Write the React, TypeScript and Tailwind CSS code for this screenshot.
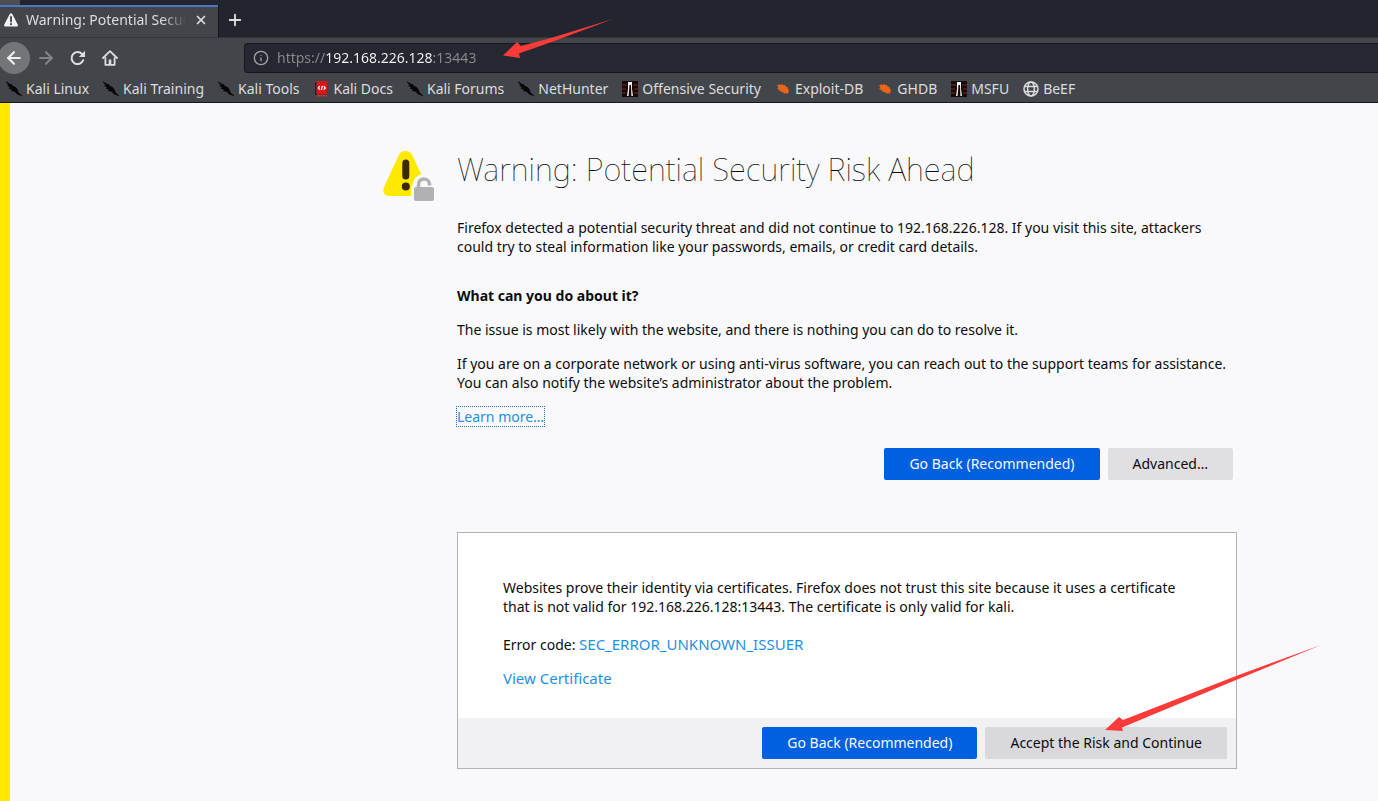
import { useState } from "react";
import { ArrowLeft, ArrowRight, Info, Plus, X } from "lucide-react";

type BookmarkIcon = "dragon" | "docs" | "offsec" | "exploit" | "globe";

const bookmarks: { label: string; icon: BookmarkIcon }[] = [
  { label: "Kali Linux", icon: "dragon" },
  { label: "Kali Training", icon: "dragon" },
  { label: "Kali Tools", icon: "dragon" },
  { label: "Kali Docs", icon: "docs" },
  { label: "Kali Forums", icon: "dragon" },
  { label: "NetHunter", icon: "dragon" },
  { label: "Offensive Security", icon: "offsec" },
  { label: "Exploit-DB", icon: "exploit" },
  { label: "GHDB", icon: "exploit" },
  { label: "MSFU", icon: "offsec" },
  { label: "BeEF", icon: "globe" },
];

function Favicon({ icon }: { icon: BookmarkIcon }) {
  if (icon === "globe") {
    return (
      <svg viewBox="0 0 16 16" className="h-4 w-4" fill="none" stroke="#dcdcdd" strokeWidth="1.5">
        <circle cx="8" cy="8" r="7" />
        <ellipse cx="8" cy="8" rx="3.4" ry="7" />
        <path d="M1.5 5.5h13M1.5 10.5h13" />
      </svg>
    );
  }
  if (icon === "docs") {
    return (
      <svg viewBox="0 0 16 16" className="h-4 w-4">
        <path d="M2 1h2v14H2z" fill="#1c2433" />
        <path d="M3.5 0H14v13H3.5z" fill="#d8161b" />
        <path d="M2.5 14H14v1.5H2.5z" fill="#d8262a" />
        <path d="M6.8 5.2 5.3 7l1.5 1.6M9.4 4.8 8.4 9M10.8 5.2l1.5 1.8-1.5 1.6" fill="none" stroke="#fff" strokeWidth="1.2" />
      </svg>
    );
  }
  if (icon === "offsec") {
    return (
      <svg viewBox="0 0 16 16" className="h-4 w-4">
        <path d="M0 0h16v16H0z" fill="#170a0b" />
        <path d="M0 4h5M0 8h4M0 12h4M11 4h5M12 8h4M12 12h4" stroke="#5c1c1c" strokeWidth="1.4" />
        <path d="M6 1h4v7l1 7H9.4L9 4H7.5L6.6 15H5l1-7z" fill="#f4f2f0" />
      </svg>
    );
  }
  if (icon === "exploit") {
    return (
      <svg viewBox="0 0 16 16" className="h-4 w-4">
        <path d="M2 4.5 4.5 3.2l1.3.8L7 2.8l1.2 1.4 1.6-.4.8 1.7 2 .4-.2 1.4 1.8 1.4-1 .8 1.2 1.6-1.4.2-.4 1.6-1.8-.8-1.6.6-1-1.4-2.2-.2-.2-1.4L3.6 9.6l.2-1.3L2 7.5l1.4-1.3z" fill="#e8651a" />
      </svg>
    );
  }
  return (
    <svg viewBox="0 0 16 16" className="h-4 w-4">
      <path d="M0 .8 4.4 3.4l1-.4 1 2 3 1.2 2 2.6.8 2.8L16 14.8l-5-1.8-2-2.6-3.6-.6L6.6 8.6 3 7.4l1.6-.6L1.6 4.6l1.6-.2z" fill="#050505" stroke="#050505" strokeWidth=".6" />
    </svg>
  );
}

function WarningSmall() {
  return (
    <svg viewBox="0 0 14 14" className="h-3.5 w-3.5 shrink-0">
      <path d="M7 .3c.6 0 1 .3 1.3.8l5.4 10.4c.5 1-.1 2.1-1.2 2.1h-11c-1.1 0-1.7-1.1-1.2-2.1L5.7 1.1C6 .6 6.4.3 7 .3z" fill="#f3f3f4" />
      <path d="M7 4v4.5" stroke="#42454a" strokeWidth="1.8" strokeLinecap="round" />
      <circle cx="7" cy="11.2" r="1.1" fill="#42454a" />
    </svg>
  );
}

function ReloadIcon() {
  return (
    <svg viewBox="0 0 16 16" className="h-4 w-4" fill="none" stroke="currentColor" strokeWidth="2">
      <path d="M13.2 10.2A6 6 0 1 1 12 4" strokeLinecap="round" />
      <path d="M15 .8V7H8.8z" fill="currentColor" stroke="none" />
    </svg>
  );
}

function HomeIcon() {
  return (
    <svg viewBox="0 0 16 16" className="h-4 w-4" fill="none" stroke="currentColor" strokeWidth="1.8" strokeLinejoin="round" strokeLinecap="round">
      <path d="M1 8 8 1.2 15 8" />
      <path d="M3.4 8v6.8h9.2V8" />
      <path d="M8 14V9.5" strokeWidth="2.6" strokeLinecap="butt" />
    </svg>
  );
}

function WarningLock() {
  return (
    <svg viewBox="0 0 52 52" className="h-13 w-13 shrink-0" aria-hidden="true">
      <path d="M22.5 1c3 0 5.3 1.4 6.7 4.2l15 31.3c2 4.2-.4 9.5-5.2 9.5H6C1.2 46-1 41.3 1 37L15.8 5.2C17.2 2.4 19.5 1 22.5 1z" fill="#ffe900" />
      <path d="M22.8 13v13" stroke="#3e2800" strokeWidth="7" strokeLinecap="round" />
      <circle cx="22.8" cy="36.5" r="4" fill="#3e2800" />
      <path d="M30 34c0-5 5-10 11-10 5 0 9 3 10 8l1 20H28V37z" fill="#f9f9fb" />
      <path d="M35.5 39v-4a5.5 5.5 0 0 1 11-1v1.5" fill="none" stroke="#b1b1b3" strokeWidth="3.5" />
      <rect x="31" y="37" width="20" height="14" rx="2" fill="#b1b1b3" />
    </svg>
  );
}

function BrowserChrome() {
  const [url, setUrl] = useState("https://192.168.226.128:13443");

  return (
    <header className="border-b border-[#16171d] bg-[#42454a] text-sm text-[#dddddf]">
      {/* Tab strip */}
      <div className="bg-[#23252e]">
        <div className="h-[5px] w-5 bg-[#4b4e53]" />
        <div className="flex h-8">
          <div className="flex w-[218px] items-center gap-2 border-t-2 border-[#4a76c0] bg-[#42454a] pr-2.5 pb-1 pl-1">
            <WarningSmall />
            <span className="flex-1 overflow-hidden whitespace-nowrap mask-r-from-85%">Warning: Potential Security Risk Ahead</span>
            <button aria-label="Close tab">
              <X className="h-3.5 w-3.5" strokeWidth={3} />
            </button>
          </div>
          <button aria-label="New tab" className="flex w-8 items-center justify-center border-l border-[#16171d] pb-0.5">
            <Plus className="h-[18px] w-[18px]" strokeWidth={2.5} />
          </button>
        </div>
      </div>

      {/* Navigation bar */}
      <nav className="flex h-10 items-center border-t border-[#33353c]">
        <button aria-label="Back" className="-ml-0.5 flex h-8 w-8 items-center justify-center rounded-full bg-[#737578] text-[#f0f0f1]">
          <ArrowLeft className="h-5 w-5" strokeWidth={2.5} />
        </button>
        <button aria-label="Forward" className="flex w-8 items-center justify-center text-[#818387]">
          <ArrowRight className="h-5 w-5" strokeWidth={2.5} />
        </button>
        <button aria-label="Reload" className="flex w-8 items-center justify-center">
          <ReloadIcon />
        </button>
        <button aria-label="Home" className="flex w-8 items-center justify-center">
          <HomeIcon />
        </button>
        <div className="ml-[118px] flex h-[30px] flex-1 items-center gap-2 rounded-l border border-r-0 border-[#17181e] bg-[#252731] pl-2">
          <Info className="h-4 w-4 text-[#a3a4a8]" />
          {/* scheme and port are dimmed, host stays bright */}
          <input
            aria-label="Address"
            value={url}
            onChange={(e) => setUrl(e.target.value)}
            className="flex-1 bg-[linear-gradient(90deg,#898a90_48px,#f9f9fa_48px,#f9f9fa_156px,#898a90_156px)] bg-clip-text text-transparent caret-white outline-none"
          />
        </div>
      </nav>

      {/* Bookmarks */}
      <nav className="flex h-[25px] items-center gap-3.5 overflow-hidden pb-0.5 pl-1.5 whitespace-nowrap">
        {bookmarks.map((b) => (
          <a key={b.label} href="#" className="flex items-center gap-1">
            <Favicon icon={b.icon} />
            {b.label}
          </a>
        ))}
      </nav>
    </header>
  );
}

function Button({ primary, children }: { primary?: boolean; children: string }) {
  return (
    <button
      className={`h-8 rounded-xs px-[25px] pb-0.5 whitespace-nowrap ${
        primary ? "bg-[#0060df] text-[#f9f9fa]" : "bg-[#0c0c0d]/10 text-[#0c0c0d]"
      }`}
    >
      {children}
    </button>
  );
}

export default function App() {
  return (
    <div className="relative flex min-h-screen flex-col bg-[#f9f9fb] font-['Noto_Sans',sans-serif]">
      <BrowserChrome />
      <main className="flex flex-1 items-start gap-[22px] border-l-10 border-[#ffe900] pt-[47px] pl-[373px] text-sm leading-[19px] text-[#0c0c0d]">
        <WarningLock />
        <div className="w-full max-w-[780px]">
          <h1 className="text-[31px] leading-[38px] font-thin">Warning: Potential Security Risk Ahead</h1>
          <p className="mt-[30px]">
            Firefox detected a potential security threat and did not continue to 192.168.226.128. If you visit this site, attackers could try to steal information like your passwords, emails, or credit card details.
          </p>
          <h2 className="mt-[30px] font-bold">What can you do about it?</h2>
          <p className="mt-[15px]">The issue is most likely with the website, and there is nothing you can do to resolve it.</p>
          <p className="mt-[15px]">
            If you are on a corporate network or using anti-virus software, you can reach out to the support teams for assistance. You can also notify the website’s administrator about the problem.
          </p>
          <p className="mt-[15px]">
            <a href="#" className="text-[#1f8fe5] outline-1 outline-dotted outline-[#2a6fb0]">Learn more…</a>
          </p>
          <div className="mt-[22px] flex justify-end gap-2 pr-1">
            <Button primary>Go Back (Recommended)</Button>
            <Button>Advanced…</Button>
          </div>

          <section className="mt-[52px] border border-[#b1b1b3] bg-white">
            <div className="px-[45px] pt-[45px] pb-[30px]">
              <p>
                Websites prove their identity via certificates. Firefox does not trust this site because it uses a certificate that is not valid for 192.168.226.128:13443. The certificate is only valid for kali.
              </p>
              <p className="mt-[19px]">
                Error code: <a href="#" className="text-[15px] text-[#1f8fe5]">SEC_ERROR_UNKNOWN_ISSUER</a>
              </p>
              <p className="mt-[15px]">
                <a href="#" className="text-[15px] text-[#1f8fe5]">View Certificate</a>
              </p>
            </div>
            <div className="flex justify-end gap-2 bg-[#f1f1f3] p-[9px]">
              <Button primary>Go Back (Recommended)</Button>
              <Button>Accept the Risk and Continue</Button>
            </div>
          </section>
        </div>
      </main>

      {/* Callout arrows */}
      <svg viewBox="0 0 110 42" className="pointer-events-none absolute top-[18px] left-[503px] h-[42px] w-[110px]">
        <path d="M110 1 48 20 18 28 14 24 0 37.500 17 40l-1-4.500 34-12z" fill="#fb3a3a" />
      </svg>
      <svg viewBox="0 0 216 90" className="pointer-events-none absolute top-[644px] left-[1105px] h-[90px] w-[216px]">
        <path d="M216 1 131 32 18 76 14 73 0 86l18 1-1-3.500L131 36z" fill="#fb3a3a" />
      </svg>
    </div>
  );
}
